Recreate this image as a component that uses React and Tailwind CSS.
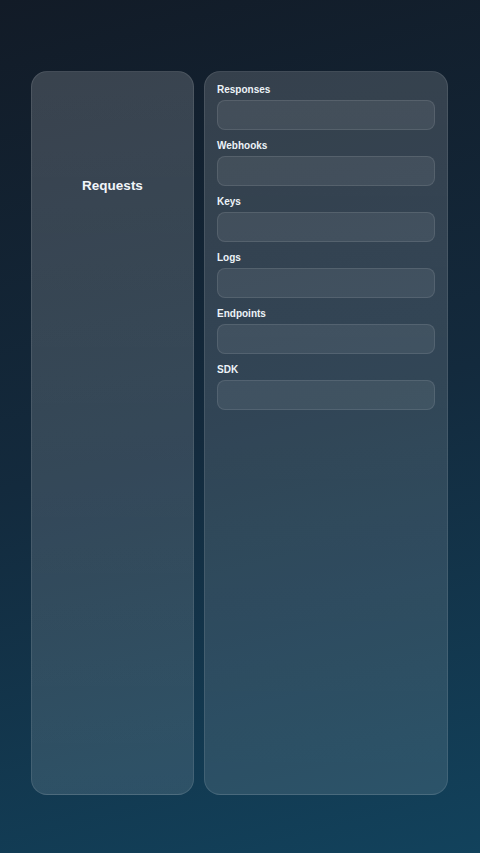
export default function App() {
  const fields = ["Responses", "Webhooks", "Keys", "Logs", "Endpoints", "SDK"];

  return (
    <div
      className="h-[853px] w-[480px] overflow-hidden bg-linear-[165deg] from-[#121b27] via-[#132a3d] to-[#12425c] font-['Liberation_Sans',Arial,sans-serif]"
    >
      <div className="flex h-full gap-[10px] pl-[31px] pr-[32px] pt-[71px] pb-[58px]">
        <div className="w-[163px] rounded-[16px] border border-white/10 bg-linear-to-b from-white/[0.17] to-white/[0.12] pt-[104px] text-center">
          <h2 className="text-[13.5px] font-bold leading-5 text-[#f1f5f9]">Requests</h2>
        </div>

        <div className="flex-1 rounded-[16px] border border-white/10 bg-linear-to-b from-white/[0.15] to-white/[0.11] px-[12px] pt-[10px]">
          {fields.map((f) => (
            <div key={f} className="mb-[8px]">
              <div className="mb-[2px] text-[10px] font-bold leading-4 text-[#edf3f8]">{f}</div>
              <div className="h-[30px] rounded-[8px] border border-white/10 bg-white/[0.07]" />
            </div>
          ))}
        </div>
      </div>
    </div>
  );
}
